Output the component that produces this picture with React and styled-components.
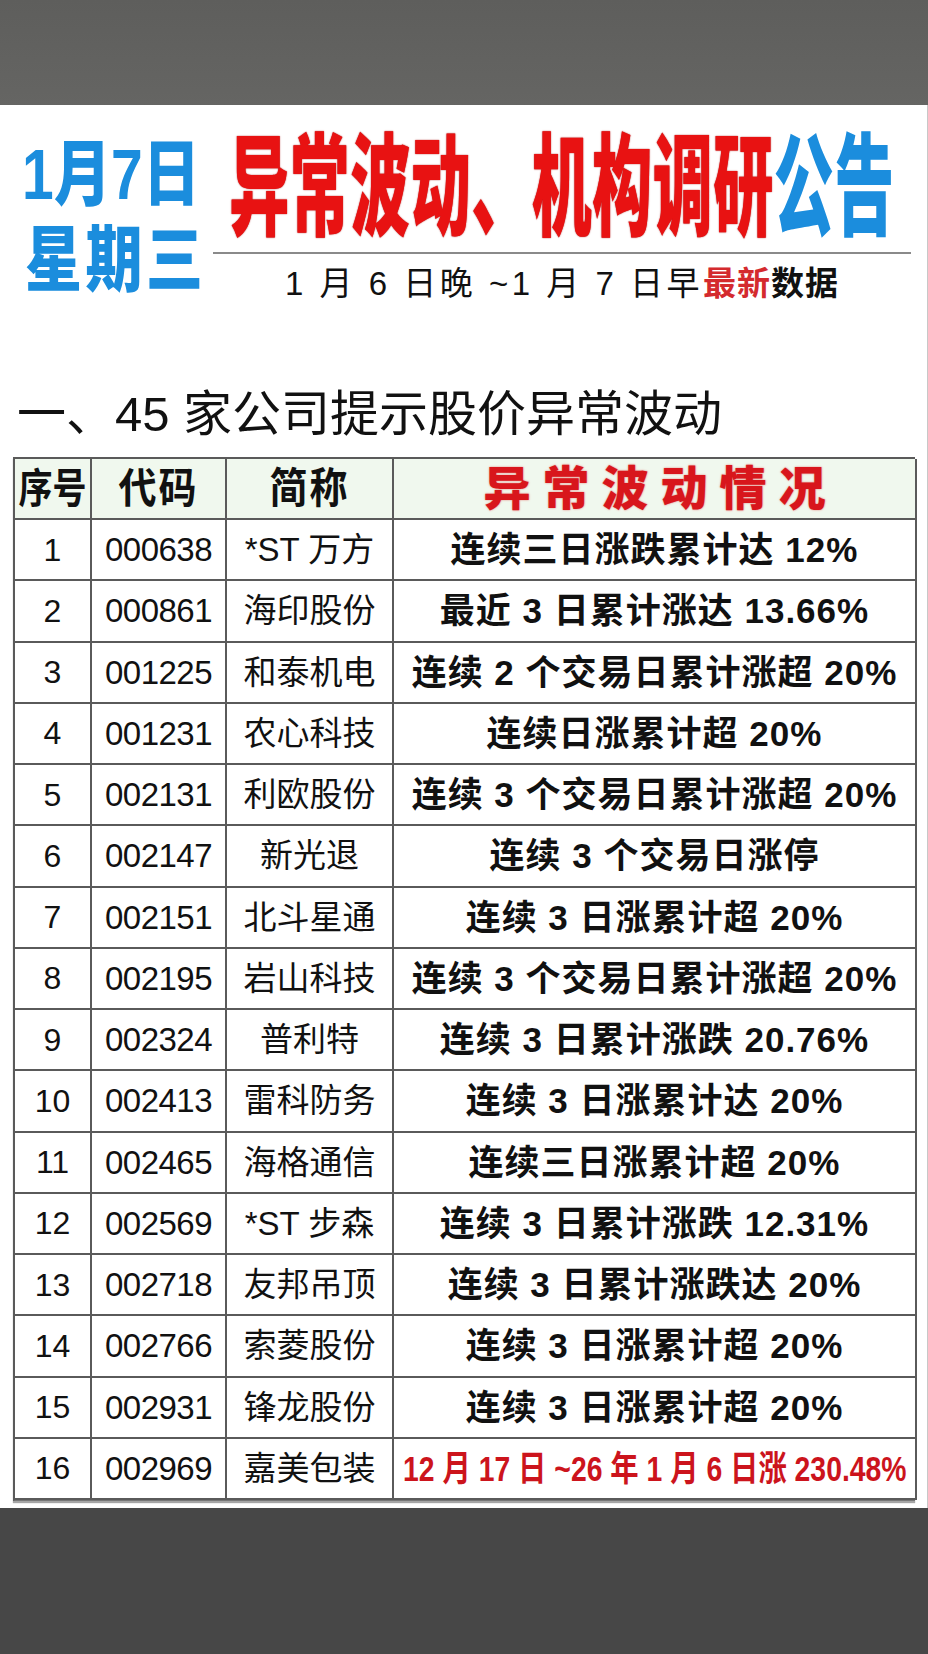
import React from "react";
import styled, { createGlobalStyle } from "styled-components";

const Global = createGlobalStyle`
  html, body { margin: 0; padding: 0; background: #474747; }
  body { font-family: "Liberation Sans", "Noto Sans CJK SC", sans-serif; }
  #root { width: 928px; }
`;

const CJK = `"Liberation Sans", "Noto Sans CJK SC", sans-serif`;

const TopBar = styled.div`
  height: 105px;
  background: linear-gradient(#5e5e5c, #656563);
`;

const BottomBar = styled.div`
  height: 146px;
  background: #474747;
`;

const Sheet = styled.div`
  background: #ffffff;
  height: 1403px;
  box-sizing: border-box;
  display: flex;
  flex-direction: column;
  border-right: 1px solid #c8c8c8;
`;

const Header = styled.header`
  display: flex;
  padding: 20px 16px 0 22px;
`;

const DateBlock = styled.div`
  width: 181px;
  display: flex;
  flex-direction: column;
  padding-top: 9px;
  gap: 6px;
`;

const DateLine = styled.div`
  height: 80px;
  display: flex;
  align-items: center;
  justify-content: space-between;
  padding-left: ${(p) => p.$inset || 0}px;
  padding-right: ${(p) => p.$insetR || 0}px;
  font-family: ${CJK};
  font-weight: 900;
  font-size: 57px;
  line-height: 1;
  color: #1b8ddd;
`;

const Stretch = styled.span`
  display: inline-block;
  white-space: nowrap;
  transform: scale(${(p) => p.$sx ?? 1}, ${(p) => p.$sy ?? 1});
  transform-origin: center;
`;

const TitleBlock = styled.div`
  flex: 1;
  margin-left: 10px;
  display: flex;
  flex-direction: column;
`;

const TitleRow = styled.div`
  height: 120px;
  box-sizing: border-box;
  padding-top: 10px;
  display: flex;
  align-items: center;
  justify-content: center;
  font-family: ${CJK};
  font-weight: 900;
  font-size: 60px;
  line-height: 1;
  letter-spacing: 0.5px;
`;

const TitleText = styled.span`
  color: ${(p) => (p.$blue ? "#1b8ddd" : "#e81212")};
  text-shadow: ${(p) => (p.$blue ? "none" : "0 0 1px #a00000")};
`;

const Rule = styled.div`
  height: 2px;
  background: #8a8a8a;
  margin-top: 7px;
`;

const Subtitle = styled.div`
  margin-top: 7px;
  height: 40px;
  display: flex;
  align-items: center;
  justify-content: center;
  font-family: ${CJK};
  font-size: 33px;
  letter-spacing: 3.5px;
  color: #111;
  white-space: pre;
`;

const Strong = styled.span`
  font-weight: 700;
  letter-spacing: 1px;
  color: ${(p) => (p.$red ? "#d42a2e" : "#111")};
`;

const SectionTitle = styled.h2`
  margin: 83px 0 0 0;
  padding-left: 17px;
  height: 60px;
  line-height: 60px;
  font-family: ${CJK};
  font-weight: 400;
  font-size: 49px;
  color: #111;
  white-space: pre;
`;

const Grid = styled.div`
  margin: 13px 0 0 13px;
  width: 902px;
  display: grid;
  grid-template-columns: 77px 135px 167px 523px;
  grid-template-rows: 61px repeat(16, 61.25px);
  border-top: 2px solid #5a5a5a;
  border-left: 2px solid #5a5a5a;
  border-bottom: 1px solid #777;
  box-sizing: border-box;
  box-shadow: 0 2px 1px rgba(0, 0, 0, 0.35);
`;

const Cell = styled.div`
  box-sizing: border-box;
  border-right: 2px solid #5a5a5a;
  border-bottom: 2px solid #5a5a5a;
  display: flex;
  align-items: center;
  justify-content: center;
  overflow: visible;
  min-width: 0;
  background: ${(p) => (p.$head ? "#f0f8ee" : "#ffffff")};
  font-family: ${CJK};
  color: ${(p) => (p.$red ? "#cc141c" : "#111")};
  font-size: ${(p) => p.$size || 33}px;
  font-weight: ${(p) => (p.$bold ? 700 : 400)};
  letter-spacing: ${(p) => p.$ls || 0}px;
  white-space: nowrap;
  line-height: 1;
`;

const HeadRed = styled.span`
  font-weight: 900;
  font-size: 47px;
  letter-spacing: 12px;
  padding-left: 12px;
  color: #d8161c;
  text-shadow: 0 0 2px rgba(220, 30, 30, 0.6);
`;

const rows = [
  ["1", "000638", "*ST 万方", "连续三日涨跌累计达 12%"],
  ["2", "000861", "海印股份", "最近 3 日累计涨达 13.66%"],
  ["3", "001225", "和泰机电", "连续 2 个交易日累计涨超 20%"],
  ["4", "001231", "农心科技", "连续日涨累计超 20%"],
  ["5", "002131", "利欧股份", "连续 3 个交易日累计涨超 20%"],
  ["6", "002147", "新光退", "连续 3 个交易日涨停"],
  ["7", "002151", "北斗星通", "连续 3 日涨累计超 20%"],
  ["8", "002195", "岩山科技", "连续 3 个交易日累计涨超 20%"],
  ["9", "002324", "普利特", "连续 3 日累计涨跌 20.76%"],
  ["10", "002413", "雷科防务", "连续 3 日涨累计达 20%"],
  ["11", "002465", "海格通信", "连续三日涨累计超 20%"],
  ["12", "002569", "*ST 步森", "连续 3 日累计涨跌 12.31%"],
  ["13", "002718", "友邦吊顶", "连续 3 日累计涨跌达 20%"],
  ["14", "002766", "索菱股份", "连续 3 日涨累计超 20%"],
  ["15", "002931", "锋龙股份", "连续 3 日涨累计超 20%"],
  ["16", "002969", "嘉美包装", "12 月 17 日 ~26 年 1 月 6 日涨 230.48%", true],
];

export default function App() {
  return (
    <>
      <Global />
      <TopBar />
      <Sheet>
        <Header>
          <DateBlock>
            <DateLine $insetR={3}>
              {["1", "月", "7", "日"].map((c, i) => (
                <Stretch key={i} $sy={1.25}>{c}</Stretch>
              ))}
            </DateLine>
            <DateLine $inset={3}>
              {["星", "期", "三"].map((c, i) => (
                <Stretch key={i} $sy={1.25}>{c}</Stretch>
              ))}
            </DateLine>
          </DateBlock>
          <TitleBlock>
            <TitleRow>
              <Stretch $sy={1.85}>
                <TitleText>异常波动、机构调研</TitleText>
                <TitleText $blue>公告</TitleText>
              </Stretch>
            </TitleRow>
            <Rule />
            <Subtitle>
              {"1 月 6 日晚 ~1 月 7 日早"}
              <Strong $red>最新</Strong>
              <Strong>数据</Strong>
            </Subtitle>
          </TitleBlock>
        </Header>

        <SectionTitle>{"一、45 家公司提示股价异常波动"}</SectionTitle>

        <Grid>
          <Cell $head $bold $size={34}>
            <Stretch $sy={1.2}>序号</Stretch>
          </Cell>
          <Cell $head $bold $size={38} $ls={2}>
            <Stretch $sy={1.1}>代码</Stretch>
          </Cell>
          <Cell $head $bold $size={38} $ls={2}>
            <Stretch $sy={1.1}>简称</Stretch>
          </Cell>
          <Cell $head>
            <HeadRed>异常波动情况</HeadRed>
          </Cell>
          {rows.map(([n, code, name, desc, red]) => (
            <React.Fragment key={n}>
              <Cell $size={32}>{n}</Cell>
              <Cell $size={33} $ls={-0.5}>{code}</Cell>
              <Cell $size={33}>{name}</Cell>
              <Cell $bold $red={red} $size={35} $ls={red ? 0 : 1}>
                {red ? <Stretch $sx={0.81}>{desc}</Stretch> : desc}
              </Cell>
            </React.Fragment>
          ))}
        </Grid>
      </Sheet>
      <BottomBar />
    </>
  );
}
